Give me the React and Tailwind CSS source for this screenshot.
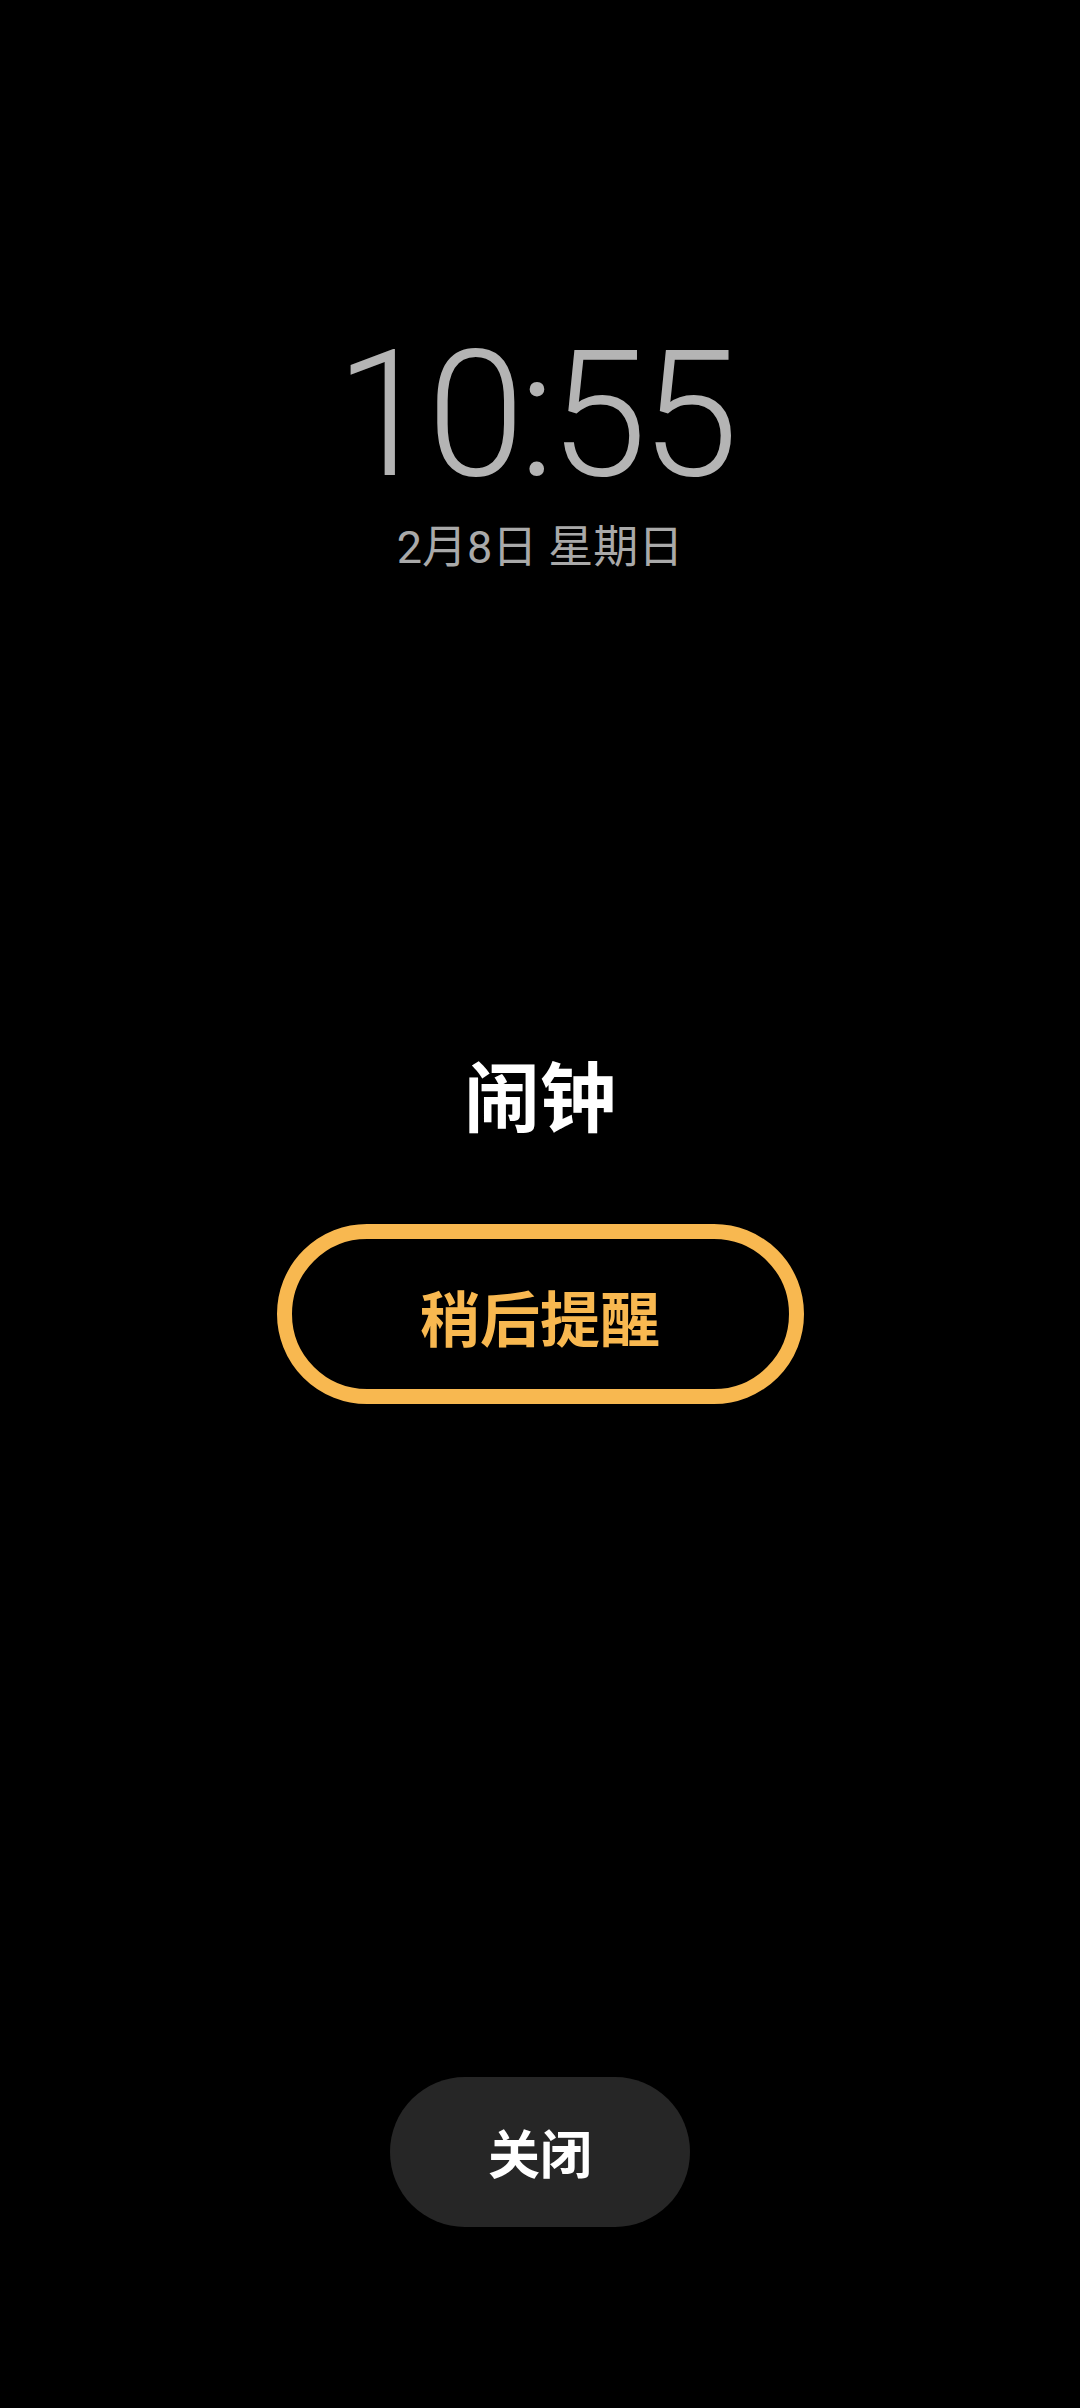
export default function App() {
  return (
    <div className="w-[1080px] h-[2408px] bg-black flex flex-col items-center overflow-hidden" style={{ fontFamily: 'Roboto, "Noto Sans CJK SC", sans-serif' }}>
      <div className="mt-[327px] text-[176px] leading-none font-light text-[#b4b4b4] tracking-[-6px] pr-[12px]" style={{ fontFamily: 'Roboto, sans-serif' }}>
        10:55
      </div>
      <div className="mt-[22px] text-[45px] leading-none text-[#a9a9a9]">
        2月8日 星期日
      </div>
      <div className="mt-[492px] text-[76px] leading-none font-bold text-white">
        闹钟
      </div>
      <button className="mt-[86px] w-[527px] h-[180px] rounded-full border-[15px] border-[#f8b850] flex items-center justify-center">
        <span className="text-[60px] leading-none font-bold text-[#f8b850] pt-[16px]">稍后提醒</span>
      </button>
      <div className="flex-1" />
      <button className="mb-[181px] w-[300px] h-[150px] rounded-full bg-[#262626] flex items-center justify-center">
        <span className="text-[52px] leading-none font-bold text-white pt-[10px]">关闭</span>
      </button>
    </div>
  );
}
